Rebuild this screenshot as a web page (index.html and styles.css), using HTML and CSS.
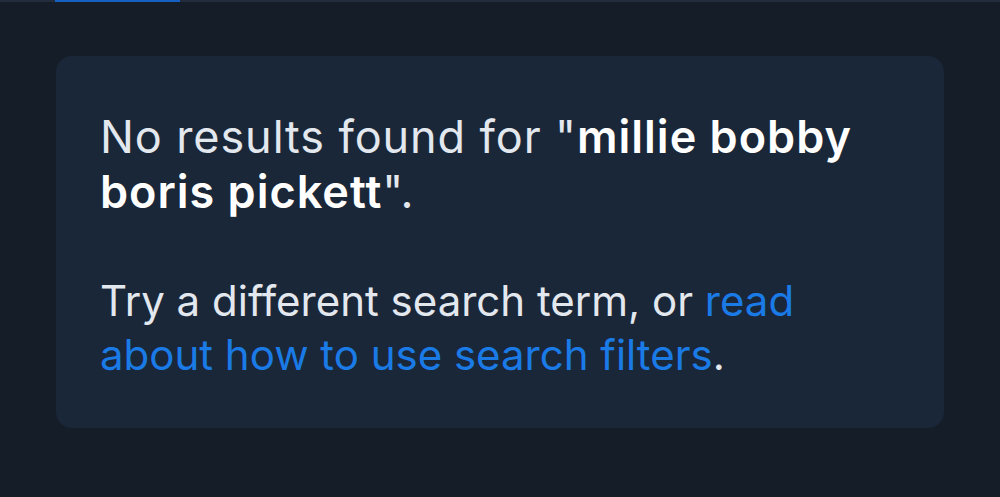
FILE: index.html
```html
<!DOCTYPE html>
<html lang="en">
<head>
<meta charset="utf-8">
<link rel="stylesheet" href="styles.css">
</head>
<body>
<div class="topbar"><span class="tab-indicator"></span></div>
<main class="page">
  <section class="card">
    <p class="msg msg-title">No results found for "<strong>millie bobby boris pickett</strong>".</p>
    <p class="msg msg-hint">Try a different search term, or <a href="#" class="link">read about how to use search filters</a>.</p>
  </section>
</main>
</body>
</html>
```

FILE: styles.css
```css
html, body {
  margin: 0;
  padding: 0;
  background: #151d29;
  height: 100%;
}
body {
  font-family: Inter, "Noto Sans", sans-serif;
  color: #e3e8ef;
}
.topbar {
  height: 2px;
  background: #232c3a;
  position: relative;
}
.tab-indicator {
  position: absolute;
  left: 55px;
  top: 0;
  width: 125px;
  height: 2px;
  background: #1660c4;
}
.page {
  padding: 54px 56px 0;
}
.card {
  background: #1a2738;
  border-radius: 16px;
  padding: 53px 44px 46px;
}
.msg {
  margin: 0;
}
.msg-title {
  font-size: 45px;
  line-height: 55px;
  letter-spacing: 0.9px;
}
.msg-hint {
  margin-top: 55px;
  font-size: 42px;
  line-height: 54px;
}
.msg strong {
  font-weight: 600;
  letter-spacing: 1px;
  color: #ffffff;
}
.link {
  color: #1a7be6;
  text-decoration: none;
}
```
